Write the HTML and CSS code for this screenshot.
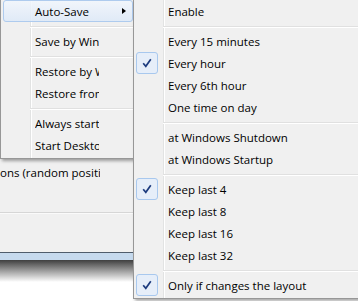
FILE: index.html
```html
<!DOCTYPE html>
<html lang="en">
<head>
  <meta charset="UTF-8">
  <title>Auto-Save menu</title>
  <link rel="stylesheet" href="styles.css">
</head>
<body>
<div class="screen">

  <!-- the dialog behind the menus -->
  <div class="window">
    <div class="window-body">
      <div class="opt-label">ons (random position)</div>
      <div class="rule"></div>
    </div>
    <div class="window-frame"></div>
    <div class="window-shadow"></div>
  </div>

  <div class="menu menu-main">
    <div class="item active"><span class="label">Auto-Save</span><span class="arrow"></span></div>
    <div class="sep"></div>
    <div class="item"><span class="label clip">Save by Window position</span></div>
    <div class="sep"></div>
    <div class="item"><span class="label clip">Restore by Window position</span></div>
    <div class="item"><span class="label clip">Restore from file</span></div>
    <div class="sep"></div>
    <div class="item"><span class="label clip">Always start with Windows</span></div>
    <div class="item"><span class="label clip">Start Desktop Restore</span></div>
  </div>

  <div class="menu menu-sub">
    <div class="item"><span class="label">Enable</span></div>
    <div class="sep"></div>
    <div class="item"><span class="label">Every 15 minutes</span></div>
    <div class="item"><span class="check"><svg width="10" height="10" viewBox="0 0 10 10"><path d="M1.2 5.2 L3.8 8.3 L8.8 1.2" fill="none" stroke="#1d3b7e" stroke-width="1.7"/></svg></span><span class="label">Every hour</span></div>
    <div class="item"><span class="label">Every 6th hour</span></div>
    <div class="item"><span class="label">One time on day</span></div>
    <div class="sep"></div>
    <div class="item"><span class="label">at Windows Shutdown</span></div>
    <div class="item"><span class="label">at Windows Startup</span></div>
    <div class="sep"></div>
    <div class="item"><span class="check"><svg width="10" height="10" viewBox="0 0 10 10"><path d="M1.2 5.2 L3.8 8.3 L8.8 1.2" fill="none" stroke="#1d3b7e" stroke-width="1.7"/></svg></span><span class="label">Keep last 4</span></div>
    <div class="item"><span class="label">Keep last 8</span></div>
    <div class="item"><span class="label">Keep last 16</span></div>
    <div class="item"><span class="label">Keep last 32</span></div>
    <div class="sep"></div>
    <div class="item"><span class="check"><svg width="10" height="10" viewBox="0 0 10 10"><path d="M1.2 5.2 L3.8 8.3 L8.8 1.2" fill="none" stroke="#1d3b7e" stroke-width="1.7"/></svg></span><span class="label">Only if changes the layout</span></div>
  </div>

</div>
</body>
</html>
```

FILE: styles.css
```css
body {
  margin: 0;
  background: #fff;
  font-family: 'Open Sans', sans-serif;
  font-size: 11.5px;
  color: #000;
}
.screen {
  position: relative;
  width: 358px;
  height: 301px;
  overflow: hidden;
}

/* dialog behind */
.window {
  width: 134px;
}
.window-body {
  height: 252px;
  box-sizing: border-box;
  padding-top: 165px;
  background: #f0f0f0;
}
.opt-label {
  width: 100px;
  overflow: hidden;
  white-space: nowrap;
  line-height: 16px;
}
.rule {
  margin-top: 31px;
  border-top: 1px solid #d6d6d6;
  border-bottom: 1px solid #fafafa;
}
.window-frame {
  height: 7px;
  border-top: 1px solid #4f5d6c;
  background: #c6daee;
}
.window-shadow {
  height: 22px;
  background: linear-gradient(#3f3f3f, #fff);
}

/* menus */
.menu {
  position: absolute;
  top: -3px;
  box-sizing: border-box;
  border: 1px solid #979797;
  padding: 2px;
  background: #f0f0f0 linear-gradient(to right, transparent 29px, #e2e3e3 29px, #e2e3e3 30px, #fff 30px, #fff 31px, transparent 31px) no-repeat;
  box-shadow: 2px 2px 3px rgba(0,0,0,0.35);
}
.menu-main {
  left: 0;
  width: 136px;
}
.menu-sub {
  left: 133px;
  width: 260px;
}
.item {
  position: relative;
  display: flex;
  align-items: center;
  height: 22px;
  box-sizing: border-box;
  padding-left: 31px;
  border: 1px solid transparent;
  border-radius: 3px;
}
.item.active {
  border-color: #aecbee;
  background: linear-gradient(rgba(241,246,253,0.85), rgba(221,233,248,0.85));
}
.label {
  white-space: nowrap;
}
.clip {
  width: 64px;
  overflow: hidden;
}
.arrow {
  position: absolute;
  right: 6px;
  top: 7px;
  border-left: 4px solid #000;
  border-top: 3.5px solid transparent;
  border-bottom: 3.5px solid transparent;
}
.check {
  position: absolute;
  left: -1px;
  top: -1px;
  width: 22px;
  height: 22px;
  box-sizing: border-box;
  border: 1px solid #a8c8ee;
  border-radius: 3px;
  background: #e6eef9;
  display: flex;
  align-items: center;
  justify-content: center;
}
.sep {
  position: relative;
  height: 8px;
  margin-left: 27px;
}
.sep::before {
  content: '';
  position: absolute;
  left: 0;
  right: 0;
  top: 4px;
  border-top: 1px solid #e0e0e0;
  border-bottom: 1px solid #fff;
}
```
